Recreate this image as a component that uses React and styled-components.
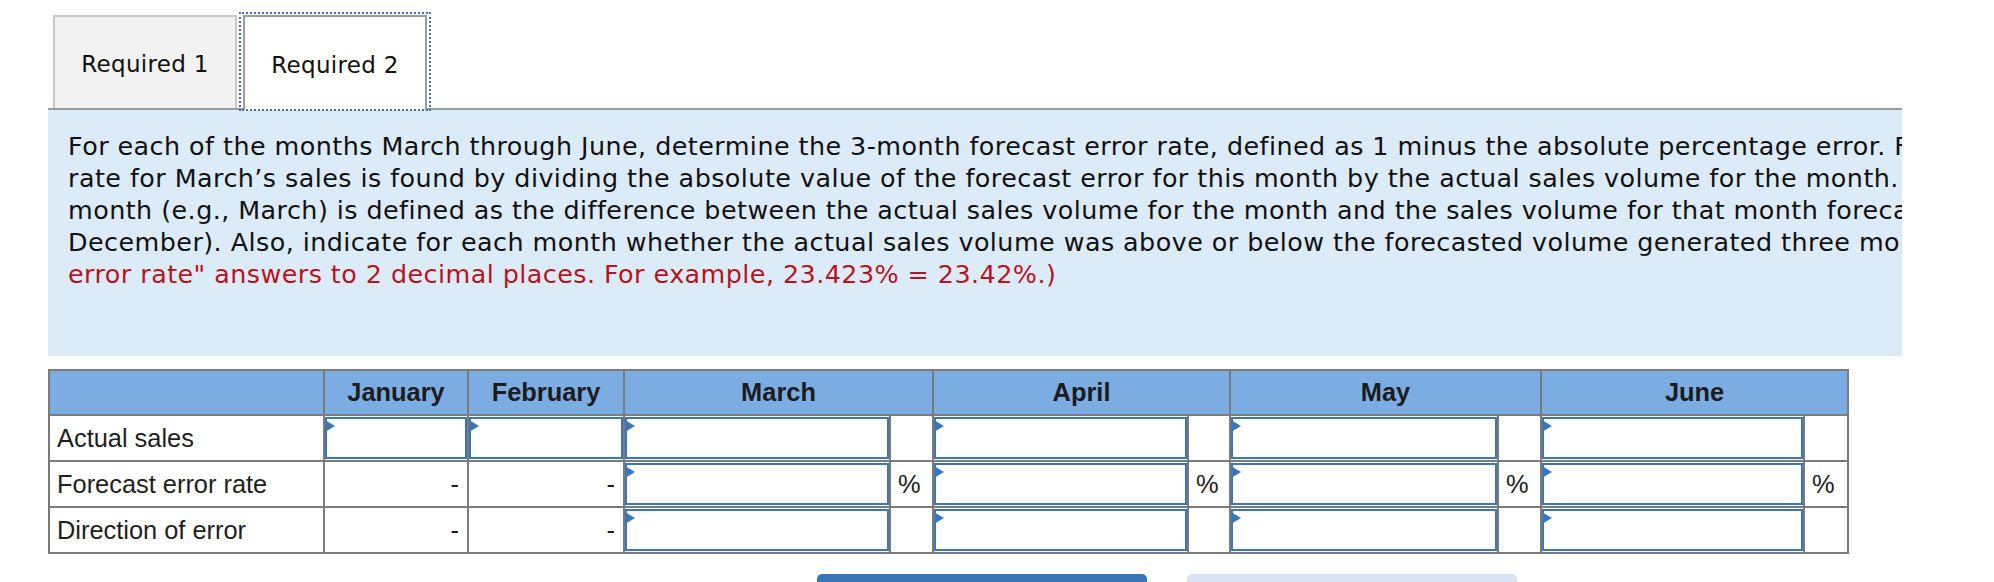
import React from "react";
import styled, { createGlobalStyle } from "styled-components";

const Global = createGlobalStyle`
  html, body { margin: 0; padding: 0; background: #ffffff; }
  body { font-family: "DejaVu Sans", Verdana, sans-serif; color: #111; }
  * { box-sizing: border-box; }
`;

const Page = styled.div`
  padding: 11px 0 0 48px;
  width: 1902px;
`;

const TabBar = styled.div`
  display: flex;
  gap: 6px;
  height: 99px;
  padding: 4px 0 0 5px;
  border-bottom: 2px solid #9a9a9a;
`;

const Tab = styled.div`
  position: relative;
  width: 184px;
  height: ${(p) => (p.$active ? "95px" : "93px")};
  margin-bottom: ${(p) => (p.$active ? "-2px" : "0")};
  display: flex;
  align-items: center;
  justify-content: center;
  padding-top: 2px;
  background: ${(p) => (p.$active ? "#ffffff" : "#f2f2f2")};
  border: 2px solid ${(p) => (p.$active ? "#9b9b9b" : "#c8c8c8")};
  border-bottom: none;
  font-family: "DejaVu Sans", Verdana, sans-serif;
  font-size: 23px;
  letter-spacing: 0.3px;
  color: #111;
  z-index: ${(p) => (p.$active ? 1 : 0)};

  ${(p) =>
    p.$active &&
    `
    &::after {
      content: "";
      position: absolute;
      top: -5px;
      left: -6px;
      right: -6px;
      bottom: -1px;
      border: 2px dotted #3b74bd;
      pointer-events: none;
    }
  `}
`;

const Panel = styled.div`
  width: 1854px;
  height: 246px;
  padding: 20px 20px 0 20px;
  background: #dcebf8;
  overflow: hidden;
  font-family: "DejaVu Sans", Verdana, sans-serif;
  font-size: 25.4px;
  letter-spacing: 0.45px;
  line-height: 32px;
  color: #111;
`;

const Line = styled.div`
  white-space: nowrap;
`;

const Red = styled.span`
  color: #b8141e;
`;

const Table = styled.table`
  margin-top: 13px;
  border-collapse: collapse;
  table-layout: fixed;
  width: 1801px;
  font-family: "Liberation Sans", Arial, Helvetica, sans-serif;
  font-size: 25.4px;
  color: #1e1e1e;
`;

const HeadCell = styled.th`
  height: 45px;
  padding: 0;
  background: #7badE2;
  border: 2px solid #7b7b7b;
  font-weight: bold;
  text-align: center;
  color: #1c1c1c;
`;

const Cell = styled.td`
  height: 46px;
  padding: ${(p) => (p.$field ? "1px 0 1px 0" : "0 8px 0 7px")};
  border: 2px solid #7b7b7b;
  background: #ffffff;
  text-align: ${(p) => (p.$right ? "right" : "left")};
  vertical-align: middle;
  white-space: nowrap;
`;

const Field = styled.div`
  position: relative;
  height: 42px;
`;

const Input = styled.input`
  display: block;
  width: 100%;
  height: 100%;
  margin: 0;
  border: 2px solid #3d76b8;
  background: #ffffff;
  outline: none;
  font: inherit;
  padding: 0 8px;
`;

const Marker = styled.span`
  position: absolute;
  left: 0;
  top: 3px;
  width: 0;
  height: 0;
  border-top: 6px solid transparent;
  border-bottom: 6px solid transparent;
  border-left: 10px solid #3d76b8;
  pointer-events: none;
`;

const Buttons = styled.div`
  display: flex;
  gap: 40px;
  margin-top: 20px;
  padding-left: 769px;
`;

const NavButton = styled.button`
  width: 330px;
  height: 52px;
  border: none;
  border-radius: 5px;
  background: ${(p) => (p.$primary ? "#3b77b7" : "#d8e4f2")};
  color: ${(p) => (p.$primary ? "#ffffff" : "#3b77b7")};
  font-family: "DejaVu Sans", Verdana, sans-serif;
  font-size: 20px;
  padding-top: 14px;
`;

function InputCell() {
  return (
    <Cell $field>
      <Field>
        <Input type="text" />
        <Marker />
      </Field>
    </Cell>
  );
}

const widths = [275, 144, 156, 266, 43, 255, 42, 268, 43, 263, 44];
const months = ["March", "April", "May", "June"];

export default function App() {
  return (
    <>
      <Global />
      <Page>
        <TabBar>
          <Tab>Required 1</Tab>
          <Tab $active>Required 2</Tab>
        </TabBar>
        <Panel>
          <Line>
            For each of the months March through June, determine the 3-month forecast error rate, defined as 1 minus the absolute percentage error. For example, the 3-month forecast error
          </Line>
          <Line>
            rate for March’s sales is found by dividing the absolute value of the forecast error for this month by the actual sales volume for the month. The forecast error for a
          </Line>
          <Line>
            month (e.g., March) is defined as the difference between the actual sales volume for the month and the sales volume for that month forecasted three months earlier (i.e., in
          </Line>
          <Line>
            December). Also, indicate for each month whether the actual sales volume was above or below the forecasted volume generated three months earlier. <Red>(Round your "forecast</Red>
          </Line>
          <Line>
            <Red>error rate" answers to 2 decimal places. For example, 23.423% = 23.42%.)</Red>
          </Line>
        </Panel>
        <Table>
          <colgroup>
            {widths.map((w, i) => (
              <col key={i} style={{ width: w }} />
            ))}
          </colgroup>
          <thead>
            <tr>
              <HeadCell />
              <HeadCell>January</HeadCell>
              <HeadCell>February</HeadCell>
              {months.map((m) => (
                <HeadCell key={m} colSpan={2}>
                  {m}
                </HeadCell>
              ))}
            </tr>
          </thead>
          <tbody>
            <tr>
              <Cell>Actual sales</Cell>
              <InputCell />
              <InputCell />
              {months.map((m) => (
                <React.Fragment key={m}>
                  <InputCell />
                  <Cell />
                </React.Fragment>
              ))}
            </tr>
            <tr>
              <Cell>Forecast error rate</Cell>
              <Cell $right>-</Cell>
              <Cell $right>-</Cell>
              {months.map((m) => (
                <React.Fragment key={m}>
                  <InputCell />
                  <Cell>%</Cell>
                </React.Fragment>
              ))}
            </tr>
            <tr>
              <Cell>Direction of error</Cell>
              <Cell $right>-</Cell>
              <Cell $right>-</Cell>
              {months.map((m) => (
                <React.Fragment key={m}>
                  <InputCell />
                  <Cell />
                </React.Fragment>
              ))}
            </tr>
          </tbody>
        </Table>
        <Buttons>
          <NavButton $primary>‹ Required 1</NavButton>
          <NavButton>Required 2 ›</NavButton>
        </Buttons>
      </Page>
    </>
  );
}
